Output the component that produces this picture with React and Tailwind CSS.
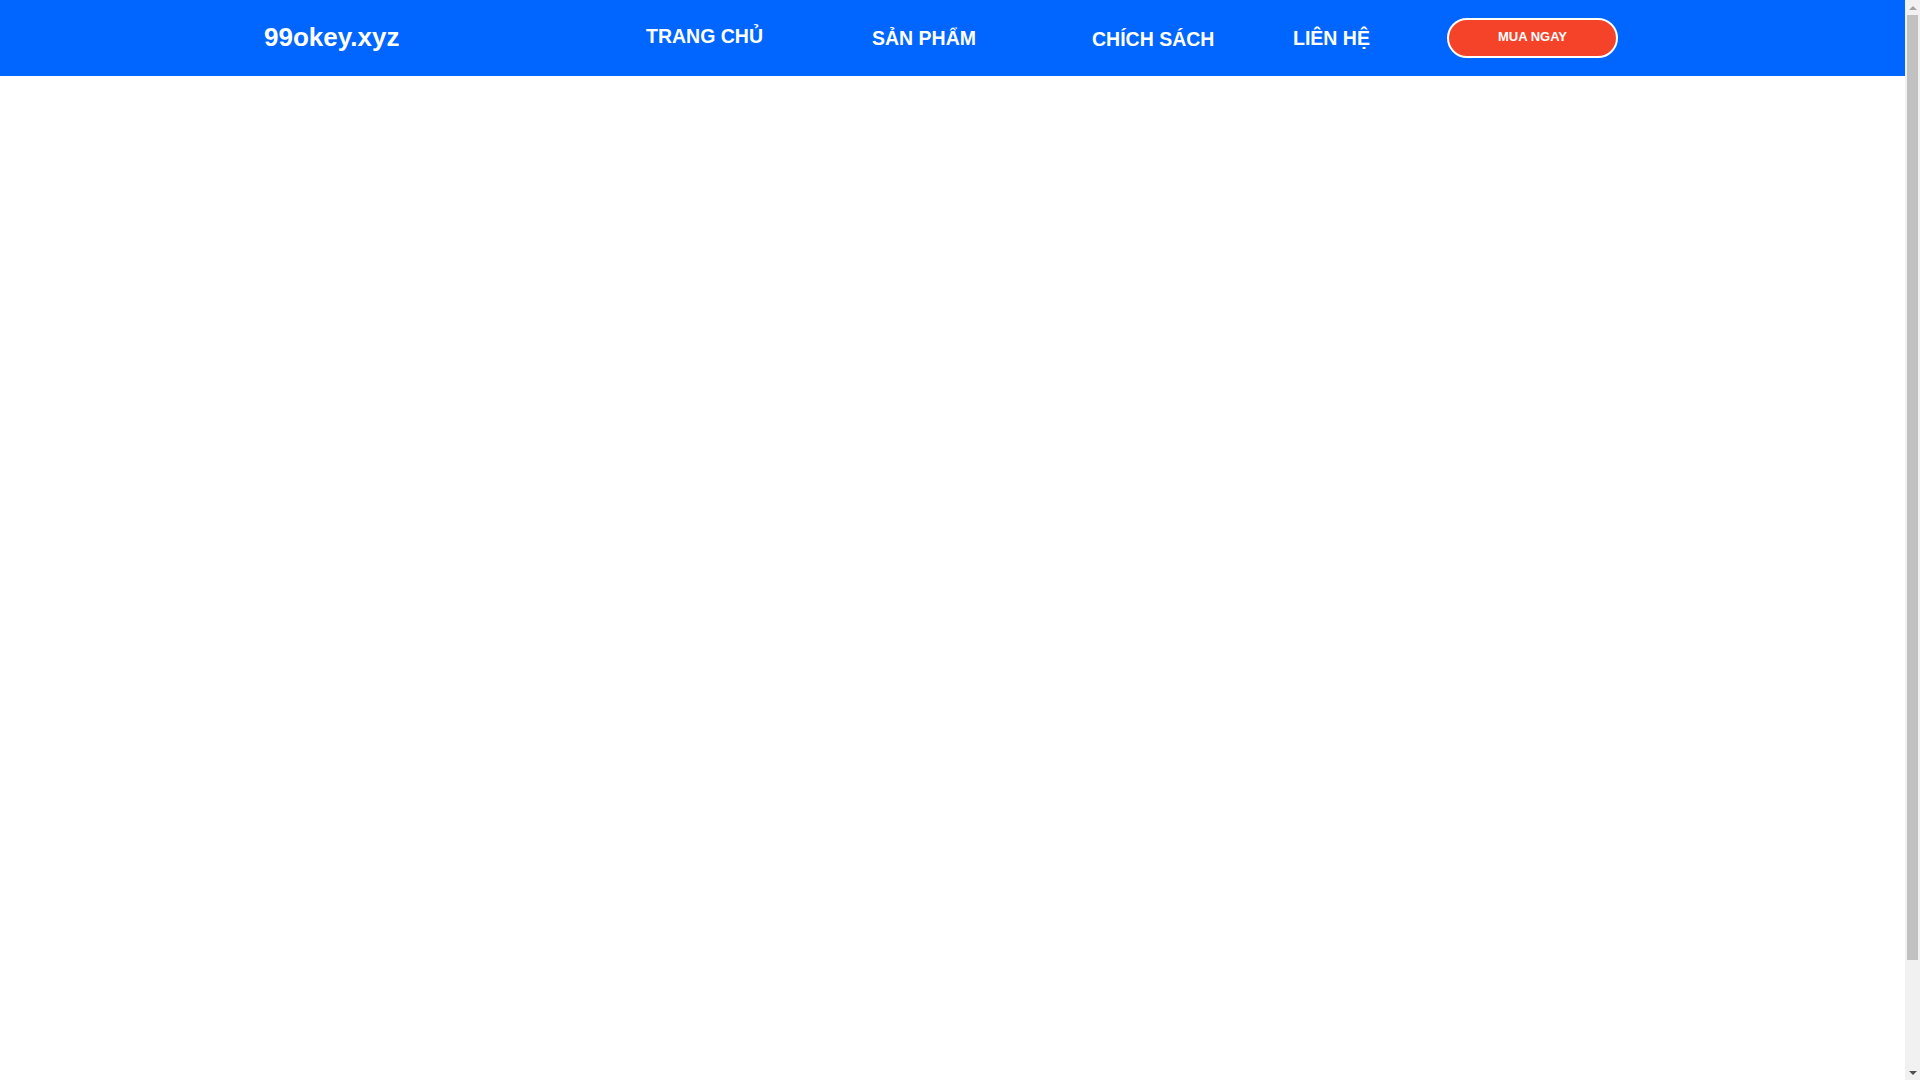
function FakeScrollbar() {
  // the reference shows the browser's vertical scrollbar at the right edge
  return (
    <div className="w-[15px] h-full bg-[#f1f1f1] flex flex-col items-center shrink-0">
      <div className="h-[15px] w-full flex items-center justify-center">
        <div className="w-0 h-0 border-l-[4px] border-r-[4px] border-b-[4px] border-l-transparent border-r-transparent border-b-[#a3a3a3]" />
      </div>
      <div className="w-[11px] h-[945px] bg-[#c1c1c1]" />
      <div className="flex-1" />
      <div className="h-[15px] w-full flex items-center justify-center">
        <div className="w-0 h-0 border-l-[4px] border-r-[4px] border-t-[4px] border-l-transparent border-r-transparent border-t-[#505050]" />
      </div>
    </div>
  );
}

export default function App() {
  return (
    <div className="h-screen overflow-hidden flex bg-white font-['Liberation_Sans',Arial,sans-serif]">
      <div className="flex-1 flex flex-col">
        {/* header */}
        <header className="h-[76px] bg-[#0066ff] flex items-start pl-[264px] shrink-0">
          <a href="#" className="w-[382px] mt-[23.5px] text-[26px] leading-none font-bold text-white">
            99okey.xyz
          </a>
          <nav className="flex items-start">
            <a href="#" className="w-[226px] mt-[27px] text-[19.5px] leading-none font-bold text-white">
              TRANG CHỦ
            </a>
            <a href="#" className="w-[220px] mt-[28.5px] text-[19.5px] leading-none font-bold text-white">
              SẢN PHẨM
            </a>
            <a href="#" className="w-[201px] mt-[29.5px] text-[19.5px] leading-none font-bold text-white">
              CHÍCH SÁCH
            </a>
            <a href="#" className="w-[154px] mt-[29px] text-[19.5px] leading-none font-bold text-white">
              LIÊN HỆ
            </a>
          </nav>
          <button className="mt-[18px] w-[171px] h-[40px] rounded-full border-2 border-white bg-[#f5432a] flex items-center justify-center pb-[2px] text-[13px] font-bold text-white">
            MUA NGAY
          </button>
        </header>

        {/* empty body */}
        <main className="flex-1" />
      </div>
      <FakeScrollbar />
    </div>
  );
}
